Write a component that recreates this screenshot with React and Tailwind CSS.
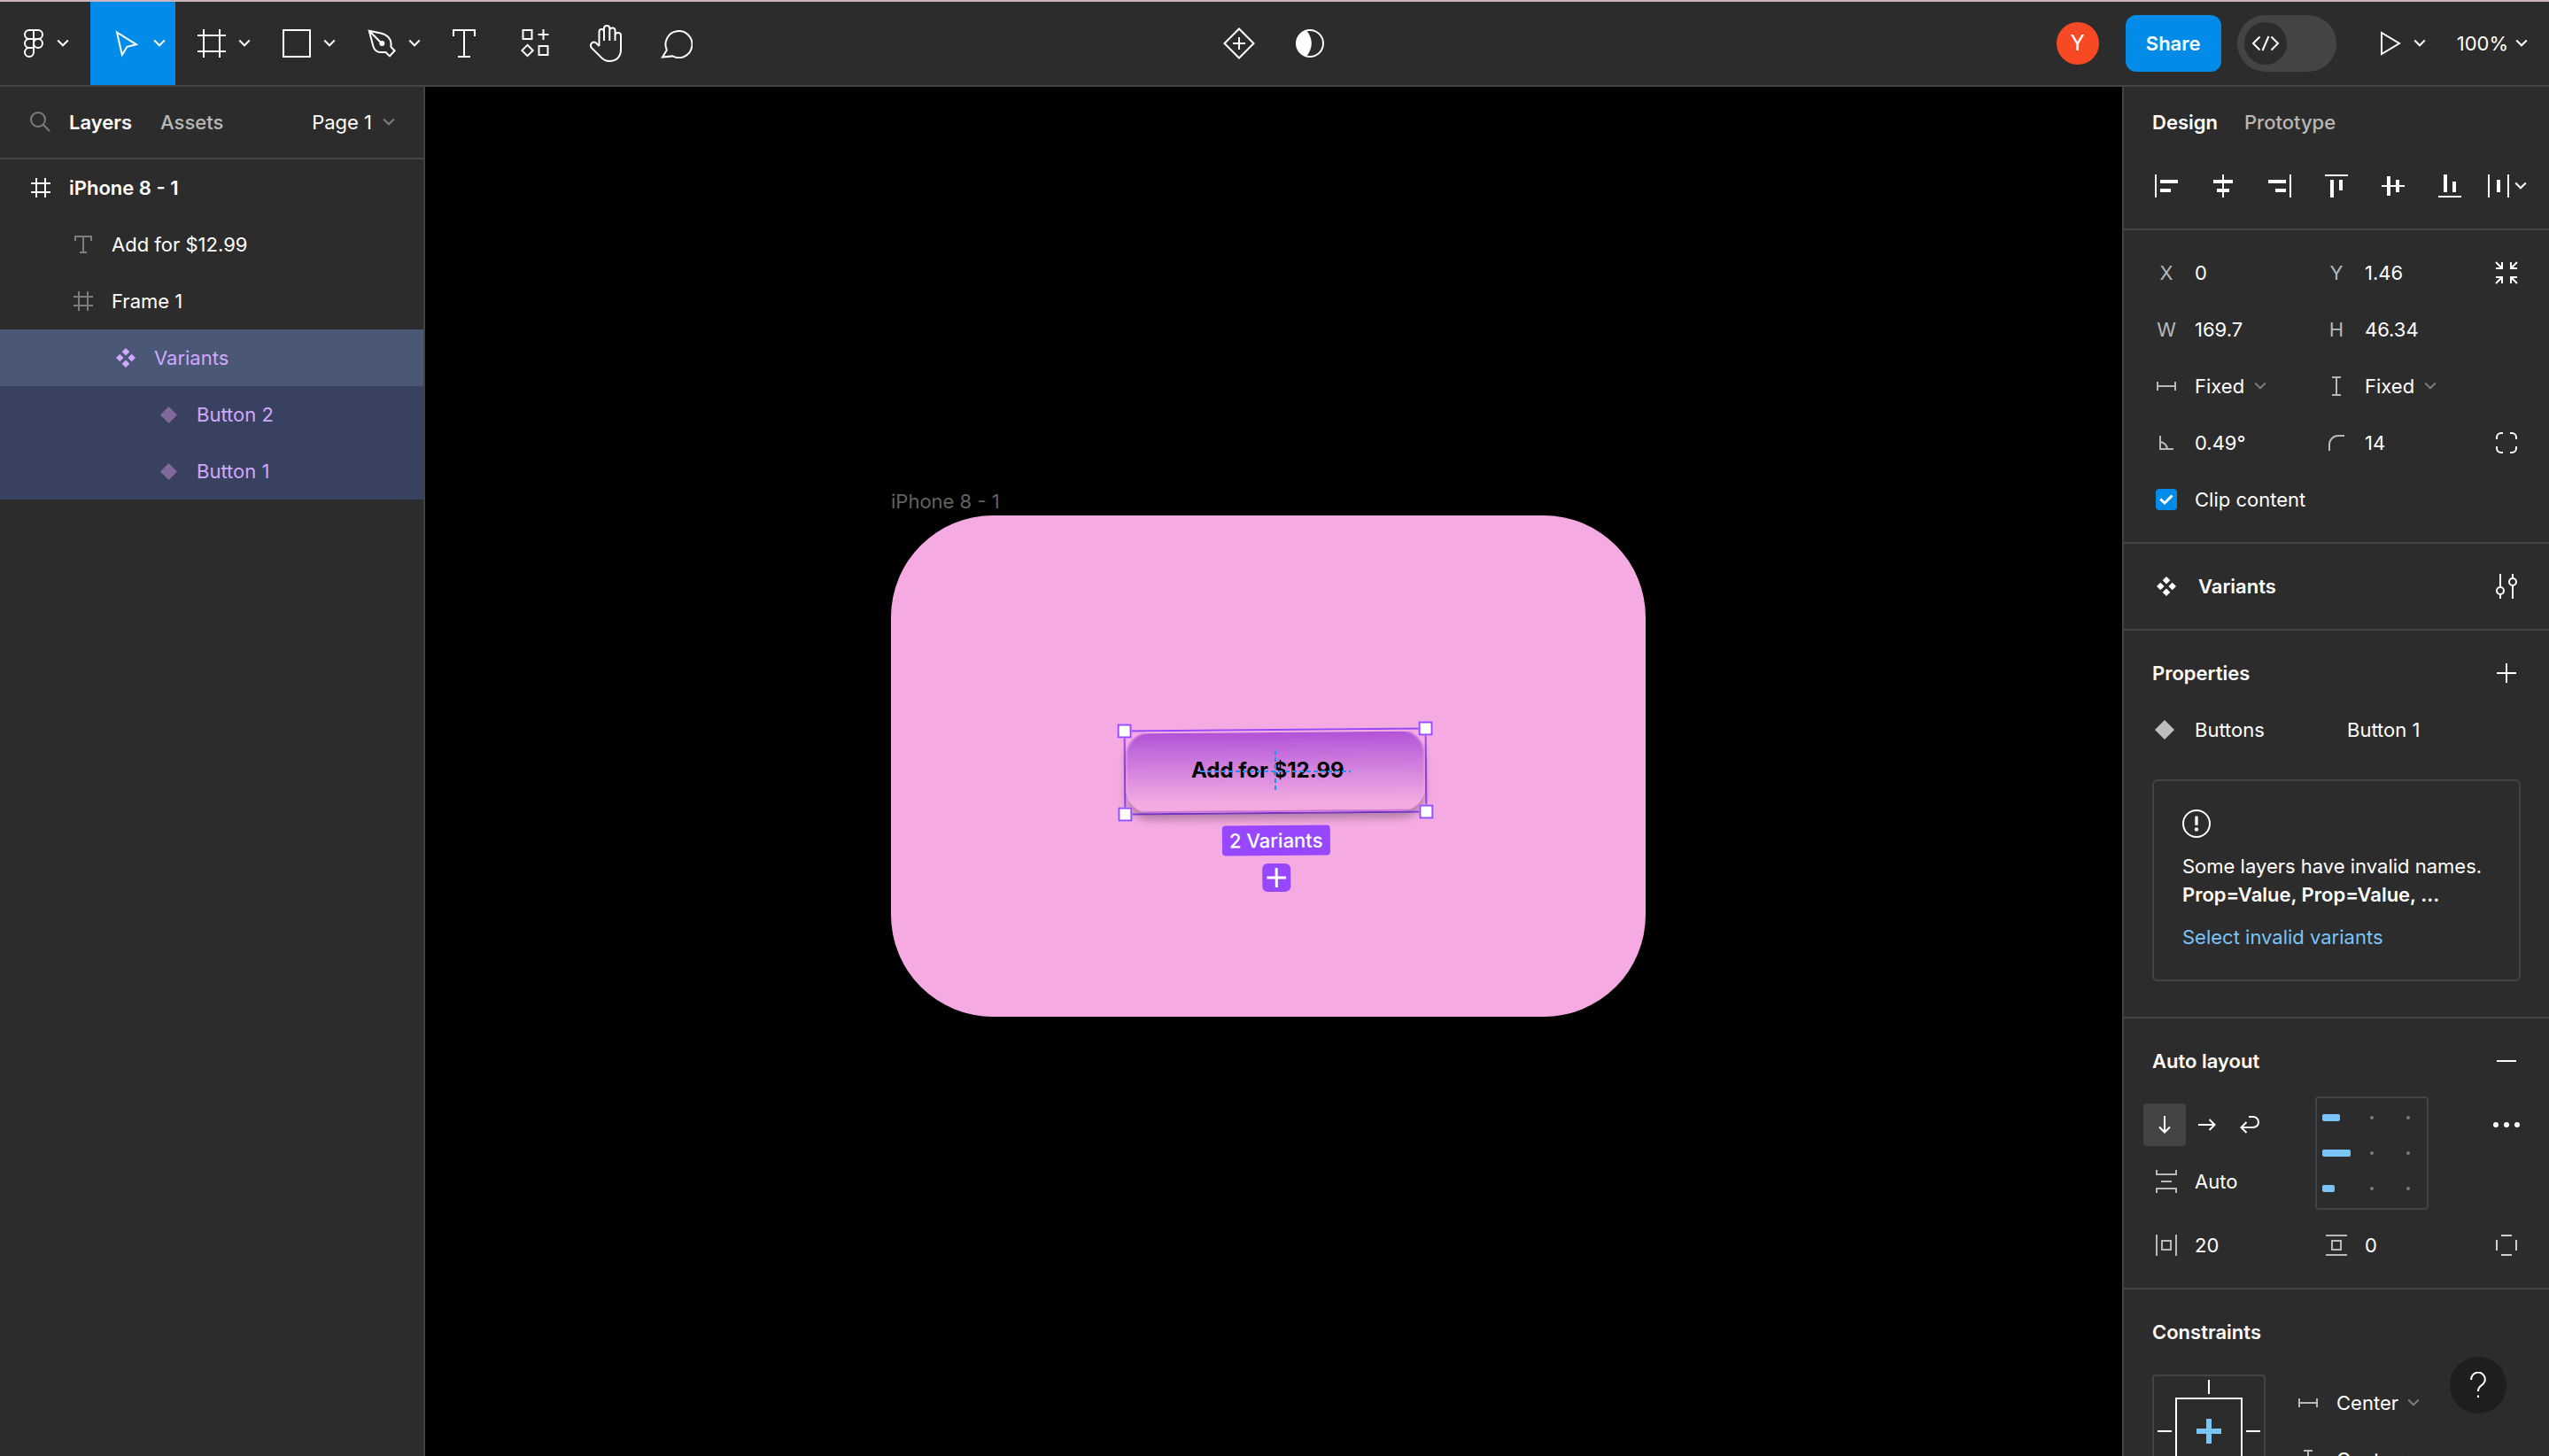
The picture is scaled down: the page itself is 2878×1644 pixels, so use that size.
import React from "react";

function Svg({ w, h, className = "", children, sw = 2 }) {
  return (
    <svg
      width={w}
      height={h}
      viewBox={`0 0 ${w} ${h}`}
      fill="none"
      stroke="currentColor"
      strokeWidth={sw}
      className={`shrink-0 ${className}`}
      aria-hidden="true"
    >
      {children}
    </svg>
  );
}

const Chevron = ({ className = "" }) => (
  <Svg w={14} h={10} className={className}>
    <path d="M1.2 1.5 L7 7.3 L12.8 1.5" />
  </Svg>
);

const FigmaLogo = () => (
  <Svg w={22} h={32}>
    <path d="M11 1H6a5 5 0 0 0 0 10H11ZM11 1H16a5 5 0 0 1 0 10H11ZM11 11H6a5 5 0 0 0 0 10H11ZM11 21H6a5 5 0 1 0 5 5Z" />
    <circle cx="16" cy="16" r="5" />
  </Svg>
);

const MoveIcon = () => (
  <Svg w={26} h={31}>
    <path d="M2 2.5 L24 16.3 L13.5 18.8 L7.8 28Z" />
  </Svg>
);

const FrameToolIcon = () => (
  <Svg w={32} h={32}>
    <path d="M7 0V32M25 0V32M0 7H32M0 25H32" />
  </Svg>
);

const RectIcon = () => (
  <Svg w={32} h={32}>
    <path d="M1 1H31V31H1Z" />
  </Svg>
);

const PenIcon = () => (
  <Svg w={32} h={32}>
    <path d="M1.8 1.8 L16 4.8 C22 6.2 26.5 11 26.5 16 V20 L30.6 24.3 L25 30.4 L20.5 26 H15 C10.5 26 7.5 23 6.3 19 ZM1.8 1.8 L16 16" />
    <circle cx="16.3" cy="16" r="3" fill="currentColor" stroke="none" />
  </Svg>
);

const TextToolIcon = () => (
  <Svg w={26} h={32}>
    <path d="M1 8V1H25V8M13 1V31M6 31H20" />
  </Svg>
);

const ResourcesIcon = () => (
  <Svg w={32} h={32}>
    <path d="M2.5 1H12.5V11H2.5ZM20.5 19H30.5V29H20.5ZM25.5 0V12M19.5 6H31.5M7.5 17.8L13.7 24L7.5 30.2L1.3 24Z" />
  </Svg>
);

const HandIcon = () => (
  <Svg w={36} h={42}>
    <path d="M10.5 24L7.5 20.9C3.8 17.6 -0.8 21.6 1.8 26L12.6 36.6C15.5 39.8 18.5 41 22 41C30 41 35 36 35 28V12C35 8 28.5 8 28.5 12V18V6.5C28.5 2.5 22.3 2.5 22.3 6.5V18V4C22.3 0 16 0 16 4V18V8C16 4 10.5 4 10.5 8V24" />
  </Svg>
);

const CommentIcon = () => (
  <Svg w={36} h={33}>
    <path d="M2 31.6L6.9 23.5A15 15 0 1 1 13.5 30.4Z" />
  </Svg>
);

const ComponentIcon = () => (
  <Svg w={36} h={36}>
    <path d="M18 1.5L34.5 18L18 34.5L1.5 18ZM18 11V25M11 18H25" />
  </Svg>
);

const ContrastIcon = () => (
  <Svg w={32} h={32}>
    <circle cx="16" cy="16" r="15" />
    <path d="M12 1.5A15 15 0 0 0 12 30.5C19.8 22 19.8 10 12 1.5Z" fill="currentColor" stroke="none" />
  </Svg>
);

const CodeIcon = () => (
  <Svg w={32} h={18}>
    <path d="M9.5 1.5L2 9L9.5 16.5M19.5 1L12.5 17M22.5 1.5L30 9L22.5 16.5" />
  </Svg>
);

const PlayIcon = () => (
  <Svg w={23} h={28}>
    <path d="M1 2V26L21 14Z" />
  </Svg>
);

const SearchIcon = () => (
  <Svg w={24} h={24}>
    <circle cx="9" cy="9" r="8" />
    <path d="M15 15L22 22" />
  </Svg>
);

const HelpIcon = () => (
  <Svg w={18} h={30}>
    <path d="M1.2 9A7.8 7.8 0 1 1 12.6 15.3C10 17 9 18.4 9 22M9 26.5V29" />
  </Svg>
);

const HashIcon = ({ className }) => (
  <Svg w={22} h={22} className={className}>
    <path d="M6 0V22M16 0V22M0 6H22M0 16H22" />
  </Svg>
);

const TextIcon = ({ className }) => (
  <Svg w={20} h={20} className={className}>
    <path d="M1 6V1H19V6M10 1V19M6 19H14" />
  </Svg>
);

const VariantsIcon = ({ className }) => (
  <svg width="22" height="22" viewBox="0 0 22 22" fill="currentColor" className={`shrink-0 ${className || ""}`} aria-hidden="true">
    <path d="M11 0L15.3 4.3L11 8.6L6.7 4.3ZM4.3 6.7L8.6 11L4.3 15.3L0 11ZM17.7 6.7L22 11L17.7 15.3L13.4 11ZM11 13.4L15.3 17.7L11 22L6.7 17.7Z" />
  </svg>
);

const Diamond = ({ size, className }) => (
  <svg width={size} height={size} viewBox="0 0 20 20" fill="currentColor" className={`shrink-0 ${className}`} aria-hidden="true">
    <path d="M10 0L20 10L10 20L0 10Z" />
  </svg>
);

const WidthIcon = () => (
  <Svg w={22} h={10}>
    <path d="M1 0V10M21 0V10M1 5H21" />
  </Svg>
);

const HeightIcon = () => (
  <Svg w={10} h={22}>
    <path d="M0 1H10M0 21H10M5 1V21" />
  </Svg>
);

const AngleIcon = () => (
  <Svg w={16} h={16}>
    <path d="M1 0V15H16M1 7A8.5 8.5 0 0 1 9 15" />
  </Svg>
);

const RadiusIcon = () => (
  <Svg w={18} h={18}>
    <path d="M1 18V11A10 10 0 0 1 11 1H18" />
  </Svg>
);

const CollapseIcon = () => (
  <Svg w={26} h={26}>
    <path d="M1 1L8 8M8 1V8H1M25 1L18 8M18 1V8H25M1 25L8 18M8 25V18H1M25 25L18 18M18 25V18H25" />
  </Svg>
);

const CornersIcon = () => (
  <Svg w={24} h={24}>
    <path d="M1 8V6A5 5 0 0 1 6 1H8M16 1H18A5 5 0 0 1 23 6V8M23 16V18A5 5 0 0 1 18 23H16M8 23H6A5 5 0 0 1 1 18V16" />
  </Svg>
);

const SettingsIcon = () => (
  <Svg w={24} h={28}>
    <path d="M5 0V15M5 23V28M19 0V5M19 13V28" />
    <circle cx="5" cy="19" r="4" />
    <circle cx="19" cy="9" r="4" />
  </Svg>
);

const ALIGN_ICONS = [
  { name: "Align left", w: 26, h: 26, d: "M0 0H2V26H0ZM6 6H26V10H6ZM6 16H18V20H6Z" },
  { name: "Align horizontal centers", w: 22, h: 26, d: "M10 0H12V26H10ZM0 6H22V10H0ZM4 16H18V20H4Z" },
  { name: "Align right", w: 26, h: 26, d: "M24 0H26V26H24ZM0 6H20V10H0ZM8 16H20V20H8Z" },
  { name: "Align top", w: 26, h: 26, d: "M0 0H26V2H0ZM6 6H10V26H6ZM16 6H20V18H16Z" },
  { name: "Align vertical centers", w: 26, h: 22, d: "M0 10H26V12H0ZM6 0H10V22H6ZM16 4H20V18H16Z" },
  { name: "Align bottom", w: 26, h: 26, d: "M0 24H26V26H0ZM6 0H10V20H6ZM16 8H20V20H16Z" },
];

function Tool({ label, active, wide, children }) {
  const size = wide ? "w-24 pl-3 gap-3" : "w-20";
  const tone = active ? "bg-[#028be8]" : "";
  return (
    <button aria-label={label} className={`flex h-full items-center justify-center ${size} ${tone}`}>
      <span className="flex w-9 justify-center">{children}</span>
      {wide && <Chevron />}
    </button>
  );
}

function Toolbar() {
  return (
    <header className="grid h-24 shrink-0 grid-cols-[1fr_auto_1fr] border-b-2 border-[#444444] bg-[#2c2c2c]">
      <div className="flex">
        <button aria-label="Main menu" className="flex h-full w-[102px] items-center gap-[15px] pl-[27px]">
          <FigmaLogo />
          <Chevron />
        </button>
        <Tool label="Move" wide active><MoveIcon /></Tool>
        <Tool label="Frame" wide><FrameToolIcon /></Tool>
        <Tool label="Rectangle" wide><RectIcon /></Tool>
        <Tool label="Pen" wide><PenIcon /></Tool>
        <div className="-ml-0.5 flex">
          <Tool label="Text"><TextToolIcon /></Tool>
          <Tool label="Resources"><ResourcesIcon /></Tool>
          <Tool label="Hand"><HandIcon /></Tool>
          <Tool label="Comment"><CommentIcon /></Tool>
        </div>
      </div>
      <div className="flex">
        <Tool label="Create component"><ComponentIcon /></Tool>
        <Tool label="Use as mask"><ContrastIcon /></Tool>
      </div>
      <div className="flex items-center justify-end pr-6">
        <button aria-label="Account" className="mr-[30px] flex size-12 items-center justify-center rounded-full bg-[#f64924] text-2xl">
          Y
        </button>
        <button className="mr-[18px] h-16 w-[108px] rounded-xl bg-[#028be8] text-[22px] font-semibold">Share</button>
        <button role="switch" aria-checked="false" aria-label="Dev mode" className="flex h-16 w-28 items-center rounded-full bg-[#444444] pl-2">
          <span className="flex size-12 items-center justify-center rounded-full bg-[#2c2c2c]">
            <CodeIcon />
          </span>
        </button>
        <button aria-label="Present" className="ml-[50px] flex items-center gap-3.5">
          <PlayIcon />
          <Chevron />
        </button>
        <button className="ml-[35px] flex items-center gap-2">
          100%
          <Chevron />
        </button>
      </div>
    </header>
  );
}

function Layer({ indent, icon, children, className = "" }) {
  return (
    <li>
      <button className={`flex h-16 w-full items-center gap-4 text-left ${indent} ${className}`}>
        <span className="flex w-8 justify-center">{icon}</span>
        {children}
      </button>
    </li>
  );
}

function LayersPanel() {
  return (
    <aside className="w-[480px] shrink-0 border-r-2 border-[#444444] bg-[#2c2c2c]">
      <div className="flex h-[82px] items-center border-b-2 border-[#444444] pr-8 pl-[34px]">
        <button aria-label="Search" className="mr-5 text-[#7d7d7d]"><SearchIcon /></button>
        <button className="mr-8 font-semibold">Layers</button>
        <button className="font-medium text-[#b8b8b8]">Assets</button>
        <button className="ml-auto flex items-center gap-3">
          Page 1
          <Chevron className="text-[#7d7d7d]" />
        </button>
      </div>
      <ul>
        <Layer indent="pl-[30px]" icon={<HashIcon />} className="font-semibold">iPhone 8 - 1</Layer>
        <Layer indent="pl-[78px]" icon={<TextIcon className="text-[#7d7d7d]" />}>Add for $12.99</Layer>
        <Layer indent="pl-[78px]" icon={<HashIcon className="text-[#7d7d7d]" />}>Frame 1</Layer>
        <Layer indent="pl-[126px]" icon={<VariantsIcon />} className="bg-[#4a5875] text-[#d1a8ff]">Variants</Layer>
        <Layer indent="pl-[174px]" icon={<Diamond size={19} className="text-[#80699b]" />} className="bg-[#394160] text-[#d1a8ff]">Button 2</Layer>
        <Layer indent="pl-[174px]" icon={<Diamond size={19} className="text-[#80699b]" />} className="bg-[#394160] text-[#d1a8ff]">Button 1</Layer>
      </ul>
    </aside>
  );
}

function Handle({ className }) {
  return <span className={`absolute size-4 border-2 border-[#9747ff] bg-white ${className}`} />;
}

function Canvas() {
  return (
    <main className="relative min-w-0 flex-1 overflow-hidden bg-black">
      <span className="absolute top-[452px] left-[526px] leading-8 text-[#616161]">iPhone 8 - 1</span>
      <div className="absolute top-[484px] left-[526px] h-[566px] w-[852px] rounded-[115px] bg-[#f5abe2]">
        <div className="absolute top-[241px] left-[263px] h-24 w-[342px] -rotate-[0.49deg] border-2 border-[#9747ff]">
          <div className="flex h-full items-center justify-center rounded-[28px] border-2 border-[#f5abe2]/40 bg-linear-to-b from-[#b252d8] to-[#f2abe0] to-90% shadow-[0_8px_8px_rgba(0,0,0,0.25)]" />
          <Handle className="-top-[9px] -left-[9px]" />
          <Handle className="-top-[9px] -right-[9px]" />
          <Handle className="-bottom-[9px] -left-[9px]" />
          <Handle className="-right-[9px] -bottom-[9px]" />
          <div className="absolute top-[107px] left-1/2 flex -translate-x-1/2 flex-col items-center gap-[9px]">
            <span className="rounded-sm bg-[#9747ff] px-2 py-px leading-8 font-medium whitespace-nowrap">2 Variants</span>
            <button aria-label="Add variant" className="flex size-8 items-center justify-center rounded-md bg-[#9747ff]">
              <Svg w={22} h={22} sw={3}>
                <path d="M11 0V22M0 11H22" />
              </Svg>
            </button>
          </div>
        </div>
        <span className="absolute top-[272px] left-[339px] text-2xl leading-8 font-bold whitespace-nowrap text-black">Add for $12.99</span>
        <svg width="170" height="48" viewBox="0 0 170 48" className="absolute top-[265px] left-[349px]" stroke="#0d99ff" strokeWidth="2" aria-hidden="true">
          <path d="M0 24H170" strokeDasharray="5 3" />
          <path d="M85 0V48" strokeDasharray="5 3" />
        </svg>
      </div>
    </main>
  );
}

function IconCell({ children }) {
  return <span className="flex w-16 shrink-0 justify-center text-[#b8b8b8]">{children}</span>;
}

function Field({ id, label, icon, value }) {
  return (
    <div className="flex h-16 items-center">
      <label htmlFor={id} aria-label={label}>
        <IconCell>{icon || label}</IconCell>
      </label>
      <input id={id} defaultValue={value} className="w-full min-w-0 bg-transparent outline-none" />
    </div>
  );
}

function Choice({ id, label, icon, value }) {
  return (
    <div className="flex h-16 items-center">
      <label htmlFor={id} aria-label={label}>
        <IconCell>{icon}</IconCell>
      </label>
      <select id={id} className="appearance-none bg-transparent outline-none">
        <option>{value}</option>
      </select>
      <Chevron className="ml-2.5 text-[#7d7d7d]" />
    </div>
  );
}

function Section({ className = "", children }) {
  return <section className={`border-b-2 border-[#444444] px-4 ${className}`}>{children}</section>;
}

function SectionTitle({ title, children }) {
  return (
    <div className="flex h-16 items-center justify-between pl-4">
      <h2 className="font-semibold">{title}</h2>
      {children}
    </div>
  );
}

function EndButton({ label, children }) {
  return (
    <button aria-label={label} className="flex h-16 w-16 items-center justify-center">
      {children}
    </button>
  );
}

const ALIGN_ROWS = ["w-5", "w-8", "w-3.5"];

function AlignmentBox() {
  return (
    <div className="grid size-32 grid-rows-3 rounded-sm border-2 border-[#444444] px-1.5 py-0.5">
      {ALIGN_ROWS.map((width) => (
        <div key={width} className="grid grid-cols-3 items-center">
          <span className={`h-2 rounded-xs bg-[#7bc4f8] ${width}`} />
          <span className="ml-[17px] size-1 rounded-full bg-[#7d7d7d]" />
          <span className="ml-5 size-1 rounded-full bg-[#7d7d7d]" />
        </div>
      ))}
    </div>
  );
}

function DesignPanel() {
  return (
    <aside className="w-[482px] shrink-0 overflow-hidden border-l-2 border-[#444444] bg-[#2c2c2c]">
      <Section>
        <div className="flex h-20 items-center gap-[30px] pl-4">
          <button className="font-semibold">Design</button>
          <button className="font-medium text-[#b8b8b8]">Prototype</button>
        </div>
        <div className="flex h-20 pb-4">
          {ALIGN_ICONS.map((icon) => (
            <EndButton key={icon.name} label={icon.name}>
              <svg width={icon.w} height={icon.h} viewBox={`0 0 ${icon.w} ${icon.h}`} fill="currentColor" aria-hidden="true">
                <path d={icon.d} />
              </svg>
            </EndButton>
          ))}
          <button aria-label="Distribute" className="flex h-16 w-16 items-center justify-center gap-1.5 pl-0.5">
            <svg width="24" height="26" viewBox="0 0 24 26" fill="currentColor" aria-hidden="true">
              <path d="M0 0H2V26H0ZM22 0H24V26H22ZM10 6H14V20H10Z" />
            </svg>
            <Chevron />
          </button>
        </div>
      </Section>

      <Section className="grid grid-cols-[192px_192px_1fr] py-4">
        <Field id="x" label="X" value="0" />
        <Field id="y" label="Y" value="1.46" />
        <EndButton label="Resize to fit"><CollapseIcon /></EndButton>
        <Field id="w" label="W" value="169.7" />
        <Field id="h" label="H" value="46.34" />
        <span />
        <Choice id="hsize" label="Horizontal resizing" icon={<WidthIcon />} value="Fixed" />
        <Choice id="vsize" label="Vertical resizing" icon={<HeightIcon />} value="Fixed" />
        <span />
        <Field id="rotation" label="Rotation" icon={<AngleIcon />} value="0.49°" />
        <Field id="radius" label="Corner radius" icon={<RadiusIcon />} value="14" />
        <EndButton label="Independent corners"><CornersIcon /></EndButton>
        <div className="col-span-3 flex h-16 items-center">
          <span className="grid w-16 place-items-center">
            <input id="clip" type="checkbox" defaultChecked className="col-start-1 row-start-1 size-6 appearance-none rounded-sm bg-[#028be8]" />
            <Svg w={16} h={12} sw={3} className="pointer-events-none col-start-1 row-start-1">
              <path d="M1.2 5.5L6 10L14.5 1.5" />
            </Svg>
          </span>
          <label htmlFor="clip">Clip content</label>
        </div>
      </Section>

      <Section className="flex h-[98px] items-center">
        <span className="flex w-16 justify-center"><VariantsIcon /></span>
        <h2 className="pl-1 font-semibold">Variants</h2>
        <div className="ml-auto">
          <EndButton label="Edit variants"><SettingsIcon /></EndButton>
        </div>
      </Section>

      <Section className="pt-4 pb-10">
        <SectionTitle title="Properties">
          <EndButton label="Add property">
            <Svg w={22} h={22}><path d="M11 0V22M0 11H22" /></Svg>
          </EndButton>
        </SectionTitle>
        <div className="flex h-16 items-center">
          <span className="flex w-16 pl-[19px] text-[#bdbdbd]"><Diamond size={22} className="" /></span>
          <span className="w-[172px]">Buttons</span>
          <span>Button 1</span>
        </div>
        <div className="mx-4 mt-6 rounded-md border-2 border-[#444444] p-8">
          <Svg w={32} h={32}>
            <circle cx="16" cy="16" r="15" />
            <path d="M16 9V16.5" strokeWidth="3.4" strokeLinecap="round" />
            <circle cx="16" cy="22.5" r="2.2" fill="currentColor" stroke="none" />
          </Svg>
          <p className="mt-4 leading-8 whitespace-nowrap">
            Some layers have invalid names.
            <br />
            <strong className="font-semibold">Prop=Value, Prop=Value, ...</strong>
          </p>
          <a href="#invalid" className="mt-4 block leading-8 text-[#7bc4f8]">Select invalid variants</a>
        </div>
      </Section>

      <Section className="py-4">
        <SectionTitle title="Auto layout">
          <EndButton label="Remove auto layout">
            <Svg w={22} h={2}><path d="M0 1H22" /></Svg>
          </EndButton>
        </SectionTitle>
        <div className="mt-2 grid grid-cols-[200px_1fr_64px]">
          <div>
            <div className="flex h-16 items-center pl-1.5">
              <button aria-label="Vertical" className="flex size-12 items-center justify-center rounded-sm bg-[#444444]">
                <Svg w={14} h={20}><path d="M7 0V19M1 12.5L7 18.5L13 12.5" /></Svg>
              </button>
              <button aria-label="Horizontal" className="flex size-12 items-center justify-center">
                <Svg w={20} h={14}><path d="M0 7H19M12.5 1L18.5 7L12.5 13" /></Svg>
              </button>
              <button aria-label="Wrap" className="flex size-12 items-center justify-center">
                <Svg w={22} h={20}><path d="M10 1H15A6 6 0 0 1 15 13H1M7.5 7L1.5 13L7.5 19" /></Svg>
              </button>
            </div>
            <Field
              id="gap"
              label="Vertical gap"
              icon={<Svg w={24} h={26}><path d="M1 0V5H23V0M1 26V21H23V26M6 13H18" /></Svg>}
              value="Auto"
            />
          </div>
          <AlignmentBox />
          <EndButton label="More options">
            <svg width="30" height="6" viewBox="0 0 30 6" fill="currentColor" aria-hidden="true">
              <circle cx="3" cy="3" r="3" />
              <circle cx="15" cy="3" r="3" />
              <circle cx="27" cy="3" r="3" />
            </svg>
          </EndButton>
        </div>
        <div className="mt-2 grid grid-cols-[192px_192px_1fr]">
          <Field
            id="hpad"
            label="Horizontal padding"
            icon={<Svg w={24} h={24}><path d="M1 0V24M23 0V24M7 7H17V17H7Z" /></Svg>}
            value="20"
          />
          <Field
            id="vpad"
            label="Vertical padding"
            icon={<Svg w={24} h={24}><path d="M0 1H24M0 23H24M7 7H17V17H7Z" /></Svg>}
            value="0"
          />
          <EndButton label="Individual padding">
            <Svg w={24} h={24} className="text-[#d0d0d0]"><path d="M6 1H18M6 23H18M1 6V18M23 6V18" /></Svg>
          </EndButton>
        </div>
      </Section>

      <section className="px-4 py-4">
        <SectionTitle title="Constraints" />
        <div className="mt-4 flex gap-4 pl-4">
          <div className="rounded-sm border-2 border-[#444444]">
            <Svg w={124} h={124}>
              <path d="M25 25H99V99H25ZM62 4V20M62 104V120M4 62H20M104 62H120" />
              <path d="M62 48V76M48 62H76" stroke="#7bc4f8" strokeWidth="6" />
            </Svg>
          </div>
          <div>
            <Choice id="hcon" label="Horizontal constraint" icon={<WidthIcon />} value="Center" />
            <Choice id="vcon" label="Vertical constraint" icon={<HeightIcon />} value="Center" />
          </div>
        </div>
      </section>
    </aside>
  );
}

export default function App() {
  return (
    <div className="flex h-screen flex-col overflow-hidden border-t-2 border-[#cdb5bf] bg-[#2c2c2c] font-['Inter',sans-serif] text-[22px] leading-8 text-white">
      <Toolbar />
      <div className="flex min-h-0 flex-1">
        <LayersPanel />
        <Canvas />
        <DesignPanel />
      </div>
      <button aria-label="Help" className="fixed right-12 bottom-12 flex size-16 items-center justify-center rounded-full bg-[#1e1e1e]">
        <HelpIcon />
      </button>
    </div>
  );
}
